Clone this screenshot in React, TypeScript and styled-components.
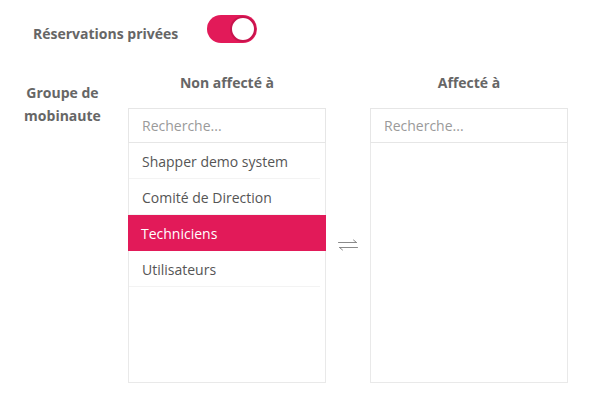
import React from "react";
import styled, { createGlobalStyle } from "styled-components";

const GlobalStyle = createGlobalStyle`
  html, body { margin: 0; padding: 0; background: #fff; }
  body { font-family: "Open Sans", "Liberation Sans", sans-serif; }
  * { box-sizing: border-box; }
`;

const PINK = "#e21a59";

const Page = styled.div`
  width: 597px;
  height: 406px;
  padding-top: 15px;
`;

const ToggleRow = styled.div`
  display: flex;
  align-items: flex-start;
  padding-left: 33px;
`;

const BoldLabel = styled.div`
  font-size: 14px;
  font-weight: 700;
  line-height: 20px;
  color: #666;
`;

const ToggleLabel = styled(BoldLabel)`
  width: 174px;
  padding-top: 9px;
`;

const Toggle = styled.button<{ $on: boolean }>`
  width: 50px;
  height: 28px;
  border-radius: 14px;
  border: none;
  padding: 1px;
  background: ${(p) => (p.$on ? PINK : "#ccc")};
  display: flex;
  justify-content: ${(p) => (p.$on ? "flex-end" : "flex-start")};
  align-items: center;
  cursor: pointer;
`;

const Knob = styled.span`
  width: 26px;
  height: 26px;
  border-radius: 50%;
  background: #fff;
  border: 2px solid #c8144d;
`;

const GroupRow = styled.div`
  display: flex;
  margin-top: 29px;
`;

const GroupLabel = styled(BoldLabel)`
  width: 125px;
  text-align: center;
  line-height: 23px;
  padding-top: 8px;
  margin-right: 3px;
`;

const Panel = styled.div`
  width: 198px;
  display: flex;
  flex-direction: column;
`;

const PanelTitle = styled(BoldLabel)`
  text-align: center;
  height: 20px;
  margin-bottom: 15px;
`;

const Search = styled.input`
  height: 35px;
  width: 100%;
  border: 1px solid #e6e6e6;
  padding: 0 13px;
  font-family: "Open Sans", "Liberation Sans", sans-serif;
  font-size: 14px;
  color: #555;
  outline: none;
  &::placeholder { color: #9a9a9a; }
`;

const List = styled.ul`
  list-style: none;
  margin: 0;
  padding: 0;
  height: 240px;
  border: 1px solid #e9e9e9;
  border-top: none;
`;

const Item = styled.li<{ $selected?: boolean }>`
  height: 36px;
  display: flex;
  align-items: center;
  padding-left: 13px;
  font-size: 14px;
  color: ${(p) => (p.$selected ? "#fff" : "#555")};
  background: ${(p) => (p.$selected ? PINK : "transparent")};
  margin: 0 ${(p) => (p.$selected ? "-1px" : "5px")} 0 ${(p) => (p.$selected ? "-1px" : "0")};
  box-shadow: ${(p) => (p.$selected ? "none" : "inset 0 -1px 0 #f3f3f3")};
`;

const Middle = styled.div`
  width: 44px;
  display: flex;
  align-items: flex-start;
  justify-content: center;
  padding-top: 166px;
`;

const SwapIcon = () => (
  <svg width="22" height="12" viewBox="0 0 22 12" fill="none" stroke="#8a8a8a" strokeWidth="1" strokeLinecap="round" strokeLinejoin="round">
    <path d="M1.5 3.5h18M16.5 1l3 2.5" />
    <path d="M20.5 8.5h-18M5.5 11l-3-2.5" />
  </svg>
);

const leftItems = ["Shapper demo system", "Comité de Direction", "Techniciens", "Utilisateurs"];

export default function App() {
  return (
    <Page>
      <GlobalStyle />
      <ToggleRow>
        <ToggleLabel>Réservations privées</ToggleLabel>
        <Toggle $on aria-label="Réservations privées">
          <Knob />
        </Toggle>
      </ToggleRow>
      <GroupRow>
        <GroupLabel>
          Groupe de
          <br />
          mobinaute
        </GroupLabel>
        <Panel>
          <PanelTitle>Non affecté à</PanelTitle>
          <Search placeholder="Recherche..." />
          <List>
            {leftItems.map((it) => (
              <Item key={it} $selected={it === "Techniciens"}>
                {it}
              </Item>
            ))}
          </List>
        </Panel>
        <Middle>
          <SwapIcon />
        </Middle>
        <Panel>
          <PanelTitle>Affecté à</PanelTitle>
          <Search placeholder="Recherche..." />
          <List />
        </Panel>
      </GroupRow>
    </Page>
  );
}
